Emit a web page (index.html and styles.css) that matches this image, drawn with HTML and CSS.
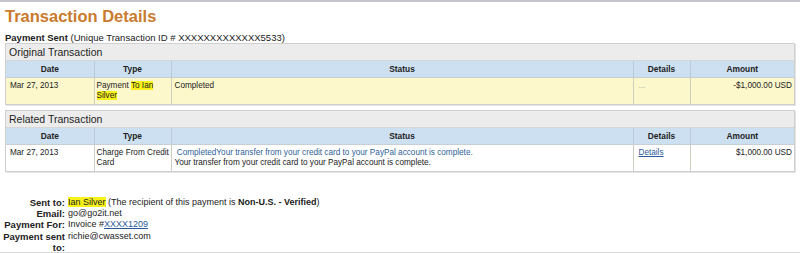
FILE: index.html
```html
<!DOCTYPE html>
<html>
<head>
<meta charset="utf-8">
<link rel="stylesheet" href="styles.css">
</head>
<body>
<div class="page">
  <h1 class="title">Transaction Details</h1>
  <p class="sub"><b>Payment Sent</b> (Unique Transaction ID # XXXXXXXXXXXXX5533)</p>

  <div class="box">
    <div class="box-head">Original Transaction</div>
    <table class="tx">
      <colgroup><col class="c-date"><col class="c-type"><col class="c-status"><col class="c-det"><col class="c-amt"></colgroup>
      <tr class="hd"><th>Date</th><th>Type</th><th>Status</th><th>Details</th><th>Amount</th></tr>
      <tr class="row yellow">
        <td>Mar 27, 2013</td>
        <td>Payment <span class="hl">To Ian Silver</span></td>
        <td>Completed</td>
        <td class="muted">...</td>
        <td class="amt">-$1,000.00 USD</td>
      </tr>
    </table>
  </div>

  <div class="box">
    <div class="box-head">Related Transaction</div>
    <table class="tx">
      <colgroup><col class="c-date"><col class="c-type"><col class="c-status"><col class="c-det"><col class="c-amt"></colgroup>
      <tr class="hd"><th>Date</th><th>Type</th><th>Status</th><th>Details</th><th>Amount</th></tr>
      <tr class="row">
        <td>Mar 27, 2013</td>
        <td>Charge From Credit Card</td>
        <td><span class="blue">&nbsp;CompletedYour transfer from your credit card to your PayPal account is complete.</span><br>Your transfer from your credit card to your PayPal account is complete.</td>
        <td><a class="link" href="#">Details</a></td>
        <td class="amt">$1,000.00 USD</td>
      </tr>
    </table>
  </div>

  <div class="info">
    <div class="lbl">Sent to:</div><div class="val"><span class="hl">Ian Silver</span> (The recipient of this payment is <b>Non-U.S. - Verified</b>)</div>
    <div class="lbl">Email:</div><div class="val">go@go2it.net</div>
    <div class="lbl">Payment For:</div><div class="val">Invoice #<a class="link" href="#">XXXX1209</a></div>
    <div class="lbl">Payment sent to:</div><div class="val">richie@cwasset.com</div>
  </div>
</div>
</body>
</html>
```
FILE: styles.css
```css
html, body {
  margin: 0;
  padding: 0;
  background: #fff;
}
body {
  font-family: "Liberation Sans", Arial, sans-serif;
  color: #222;
}
.page {
  box-sizing: border-box;
  height: 253px;
  border-top: 2px solid #c4c4cc;
  border-bottom: 1px solid #d8d8d8;
  overflow: hidden;
  padding: 0 5px 0 5px;
}
.title {
  margin: 5px 0 0 0;
  font-size: 16.5px;
  line-height: 18px;
  font-weight: bold;
  color: #c97b2e;
}
.sub {
  margin: 8px 0 0 0;
  font-size: 9.5px;
  line-height: 10px;
}
.box {
  border: 1px solid #cfcfcf;
  box-shadow: 1px 1px 0 #e4e4e4;
}
.box + .box {
  margin-top: 5px;
}
.box-head {
  background: #ececec;
  font-size: 10.5px;
  line-height: 16px;
  padding: 0 3px;
  border-bottom: 1px solid #d6d6d6;
}
.tx {
  width: 100%;
  border-collapse: collapse;
  table-layout: fixed;
  font-size: 8.2px;
}
.c-date { width: 88px; }
.c-type { width: 77px; }
.c-det { width: 57px; }
.c-amt { width: 104px; }
.tx th {
  background: #cde0f2;
  font-weight: bold;
  height: 16px;
  padding: 0;
  border-left: 1px solid #b9c9d9;
  border-bottom: 1px solid #c7cfd6;
  color: #222;
  font-size: 8.4px;
}
.tx th:first-child, .tx td:first-child { border-left: none; }
.tx td {
  vertical-align: top;
  padding: 3px 3px 3px 3px;
  line-height: 10px;
  height: 20px;
  border-left: 1px solid #cfcfc0;
}
.tx td:first-child { padding-left: 4px; }
.tx td:nth-child(2) { padding-left: 2px; padding-right: 0; }
.tx td:nth-child(4) { padding-left: 5px; }
.tx td.amt { padding-right: 2px; }
.row.yellow td { background: #fdf8cc; }
.hl { background: #f8f21a; }
.muted { color: #aaa; }
.amt { text-align: right; }
.blue { color: #2f5f98; }
.link { color: #2a5a9a; text-decoration: underline; }
.info {
  display: grid;
  grid-template-columns: 62px 1fr;
  column-gap: 3px;
  margin: 25px 0 0 -2px;
  line-height: 11.2px;
  font-size: 9px;
}
.lbl {
  text-align: right;
  font-weight: bold;
  font-size: 9.5px;
}
```
